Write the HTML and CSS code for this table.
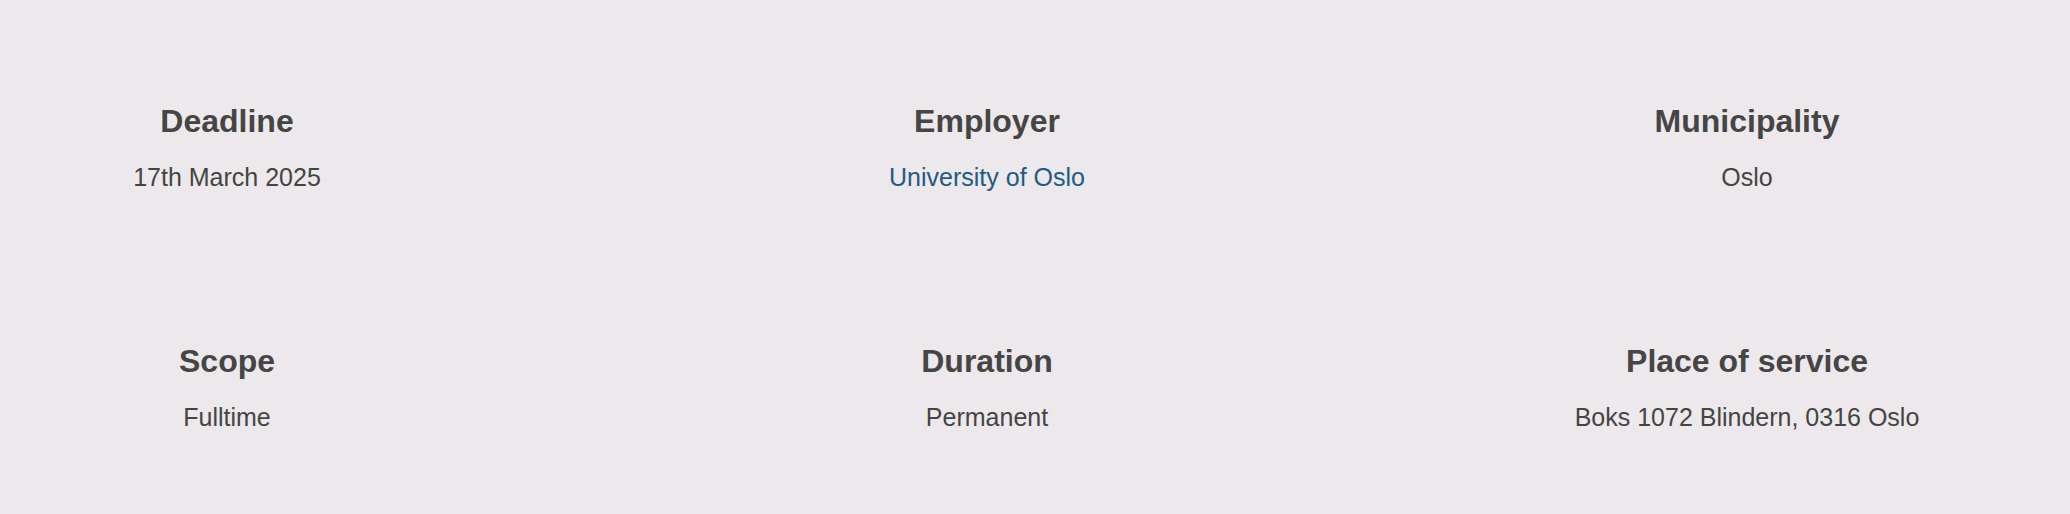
FILE: index.html
```html
<!DOCTYPE html>
<html lang="en">
<head>
<meta charset="utf-8">
<title>Job facts</title>
<link rel="stylesheet" href="styles.css">
</head>
<body>
<main class="facts">
  <div class="fact">
    <h2 class="fact-title">Deadline</h2>
    <p class="fact-value">17th March 2025</p>
  </div>
  <div class="fact">
    <h2 class="fact-title">Employer</h2>
    <p class="fact-value"><a class="fact-link" href="#">University of Oslo</a></p>
  </div>
  <div class="fact">
    <h2 class="fact-title">Municipality</h2>
    <p class="fact-value">Oslo</p>
  </div>
  <div class="fact">
    <h2 class="fact-title">Scope</h2>
    <p class="fact-value">Fulltime</p>
  </div>
  <div class="fact">
    <h2 class="fact-title">Duration</h2>
    <p class="fact-value">Permanent</p>
  </div>
  <div class="fact">
    <h2 class="fact-title">Place of service</h2>
    <p class="fact-value">Boks 1072 Blindern, 0316 Oslo</p>
  </div>
</main>
</body>
</html>
```

FILE: styles.css
```css
html, body {
  margin: 0;
  padding: 0;
  background: #ece8eb;
}
body {
  font-family: "Liberation Sans", Arial, Helvetica, sans-serif;
  color: #444444;
  height: 514px;
  overflow: hidden;
}
.facts {
  display: grid;
  grid-template-columns: repeat(3, 454px);
  column-gap: 306px;
  row-gap: 150px;
  padding-top: 102px;
}
.fact {
  display: flex;
  flex-direction: column;
  align-items: center;
  text-align: center;
  gap: 22px;
}
.fact-title {
  margin: 0;
  font-size: 32px;
  line-height: 38px;
  font-weight: 700;
  color: #454545;
}
.fact-value {
  margin: 0;
  font-size: 25px;
  line-height: 30px;
  color: #444444;
}
.fact-link {
  color: #215b84;
  text-decoration: none;
}
```
